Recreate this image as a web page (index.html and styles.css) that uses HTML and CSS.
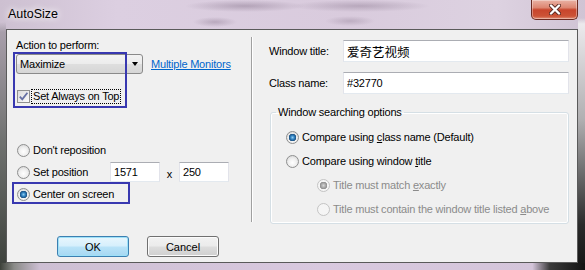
FILE: index.html
```html
<!DOCTYPE html>
<html lang="en">
<head>
  <meta charset="UTF-8"/>
  <title>AutoSize</title>
  <link rel="stylesheet" href="styles.css">
</head>
<body>
  <div class="window">
    <div class="titlebar">
      <span class="title">AutoSize</span>
      <button class="close" title="Close">
        <svg width="12" height="11" viewBox="0 0 12 11">
          <path d="M2 1.5 L10 9.5 M10 1.5 L2 9.5" stroke="#5a2a22" stroke-width="4" stroke-linecap="round"/>
          <path d="M2 1.5 L10 9.5 M10 1.5 L2 9.5" stroke="#fff" stroke-width="2.4" stroke-linecap="round"/>
        </svg>
      </button>
    </div>
    <div class="client">
      <div class="panes">
        <div class="left">
          <div class="line">Action to perform:</div>
          <div class="action-row">
            <div class="combo"><span>Maximize</span><span class="arrow"></span></div>
            <a class="link" href="#">Multiple Monitors</a>
          </div>
          <div class="check-row">
            <span class="checkbox">
              <svg width="11" height="11" viewBox="0 0 11 11"><path d="M1.8 5.6 L4.3 8.4 L9.4 1.8" fill="none" stroke="#6671a4" stroke-width="1.8"/></svg>
            </span>
            <span class="focus">Set Always on Top</span>
          </div>
          <div class="radios">
            <div class="radio-row"><span class="radio"></span><span>Don't reposition</span></div>
            <div class="radio-row">
              <span class="radio"></span><span class="pos-label">Set position</span>
              <input class="box num" value="1571"/>
              <span class="x-sep">x</span>
              <input class="box num" value="250"/>
            </div>
            <div class="radio-row"><span class="radio on"></span><span>Center on screen</span></div>
          </div>
          <div class="mark mark-action"></div>
          <div class="mark mark-center"></div>
        </div>
        <div class="sep"></div>
        <div class="right">
          <div class="field-row">
            <label>Window title:</label>
            <input class="box wide cjk" value="爱奇艺视频"/>
          </div>
          <div class="field-row">
            <label>Class name:</label>
            <input class="box wide" value="#32770"/>
          </div>
          <fieldset class="group">
            <legend>Window searching options</legend>
            <div class="group-list">
              <div class="opt"><span class="radio on"></span><span>Compare using <u>c</u>lass name (Default)</span></div>
              <div class="opt"><span class="radio"></span><span>Compare using window <u>t</u>itle</span></div>
              <div class="opt sub dis"><span class="radio on"></span><span>Title must match <u>e</u>xactly</span></div>
              <div class="opt sub dis"><span class="radio"></span><span>Title must contain the window title listed <u>a</u>bove</span></div>
            </div>
          </fieldset>
        </div>
      </div>
      <div class="buttons">
        <button class="btn default">OK</button>
        <button class="btn">Cancel</button>
      </div>
    </div>
  </div>
</body>
</html>
```

FILE: styles.css
```css
*{box-sizing:border-box;}
body{margin:0;font:11px "Liberation Sans","Noto Sans CJK SC",sans-serif;letter-spacing:-0.2px;color:#000;background:#fff;}

/* window frame */
.window{width:585px;height:270px;display:flex;flex-direction:column;
  background:
    linear-gradient(90deg,#3c4139 0,#8a8b88 14px,#cdbfd3 40px,#d9c9df 55%,#d4c5da 91%,#3a3a3a 94%,#121212 100%) left bottom/100% 7px no-repeat,
    linear-gradient(rgba(0,0,0,0) 0,rgba(0,0,0,0) 22px,#a89fab 32px,#707270 140px,#3b403a 100%) left top/6px 100% no-repeat,
    linear-gradient(rgba(0,0,0,0) 0,rgba(0,0,0,0) 18px,#eceaed 24px,#b0afb1 120px,#2a2a2a 225px,#141414 100%) right top/7px 100% no-repeat,
    radial-gradient(ellipse 60px 6px at 245px 6px,rgba(105,85,110,.35),rgba(105,85,110,0)),
    radial-gradient(ellipse 70px 6px at 360px 6px,rgba(105,85,110,.3),rgba(105,85,110,0)),
    radial-gradient(ellipse 22px 5px at 215px 22px,rgba(105,85,110,.3),rgba(105,85,110,0)),
    radial-gradient(ellipse 25px 5px at 350px 21px,rgba(105,85,110,.25),rgba(105,85,110,0)),
    linear-gradient(90deg,#cdc0d1,#dccfe1 20%,#d9cbdd 60%,#ddd2e1 85%,#d0c4d4);}
.titlebar{height:29px;flex:none;display:flex;align-items:flex-start;}
.title{padding:7px 0 0 8px;font-size:12.5px;line-height:15px;letter-spacing:0;text-shadow:0 0 6px #fff,0 0 10px #fff;}
.close{margin-left:auto;margin-right:7px;width:47px;height:20px;padding:0;display:flex;align-items:center;justify-content:center;
  border:1px solid #6b2b22;border-top:none;border-radius:0 0 5px 5px;
  background:linear-gradient(#eab2a4 0,#dd8671 40%,#c8452c 52%,#cc5336 85%,#e2927b 100%);
  box-shadow:inset 0 0 0 1px rgba(255,255,255,.35);}

.client{flex:1;margin:0 7px 7px 6px;border:1px solid #5a5a5a;background:#f0f0f0;display:flex;flex-direction:column;}
.panes{display:flex;}

/* left column */
.left{position:relative;width:244px;padding:9px 0 0 9px;}
.line{line-height:13px;}
.action-row{display:flex;align-items:center;margin-top:2px;}
.combo{width:127px;height:20px;display:flex;align-items:center;padding-left:3px;border:1px solid #8a8a8a;border-radius:3px;
  background:linear-gradient(#f3f3f3 0,#ececec 48%,#dedede 52%,#d6d6d6 100%);}
.arrow{margin-left:auto;margin-right:4px;border-left:3.5px solid transparent;border-right:3.5px solid transparent;border-top:4px solid #000;}
.link{margin-left:8px;color:#0066cc;text-decoration:underline;}
.check-row{display:flex;align-items:center;margin:15px 0 0 1px;height:15px;}
.checkbox{width:13px;height:13px;flex:none;border:1px solid #8e8f8f;display:flex;align-items:center;justify-content:center;
  background:linear-gradient(135deg,#dcdcdc,#fbfbfb);}
.focus{margin-left:1px;padding:0 1px;border:1px dotted #000;line-height:13px;}
.radios{margin-top:35px;}
.radio-row{height:22px;display:flex;align-items:center;padding-left:1px;}
.pos-label{width:77px;}
.x-sep{width:19px;text-align:center;padding-top:3px;}
.mark{position:absolute;border:2px solid #3838b0;}
.mark-action{left:6px;top:22px;width:114px;height:56px;}
.mark-center{left:5px;top:152px;width:118px;height:22px;}

/* shared controls */
.radio{width:13px;height:13px;flex:none;margin-right:3px;border-radius:50%;border:1px solid #8e8f8f;
  background:radial-gradient(circle at 50% 60%,#fff 0,#f0f0f0 45%,#cfcfcf 100%);}
.radio.on{background:radial-gradient(circle,#8fcdf0 0,#2f7fbf 2px,#1b4f7f 3.5px,rgba(255,255,255,0) 4px),
  radial-gradient(circle at 50% 60%,#fff 0,#f0f0f0 45%,#cfcfcf 100%);}
.dis{color:#8b8b8b;}
.dis .radio{border-color:#c4c4c4;background:#f5f5f5;}
.dis .radio.on{background:radial-gradient(circle,#d6d6d6 0,#a2a2a2 2.5px,#8e8e8e 3.5px,rgba(255,255,255,0) 4px),#f5f5f5;}
.box{height:20px;padding:0 3px;border:1px solid;border-color:#abadb3 #e2e3ea #e3e9ef #e2e3ea;background:#fff;font:inherit;letter-spacing:inherit;color:#000;outline:none;}
.num{width:50px;}

.sep{margin:7px 0 2px;border-left:1px solid #a0a0a0;border-right:1px solid #fff;}

/* right column */
.right{width:324px;padding:10px 8px 0 16px;}
.field-row{display:flex;align-items:center;}
.field-row + .field-row{margin-top:10px;}
.field-row label{width:74px;}
.wide{width:226px;height:22px;}
.cjk{font-size:12.5px;letter-spacing:0;}
.group{margin:12px 0 0 1px;padding:0 0 2px 5px;width:299px;border:1px solid #d5dfe5;border-radius:3px;box-shadow:inset 0 0 0 1px #fff;}
.group legend{padding:0 2px;line-height:13px;}
.group-list{margin:6px 0 0 10px;}
.opt{height:24px;display:flex;align-items:center;}
.opt.sub{padding-left:31px;}
u{text-decoration:underline;}

/* bottom buttons */
.buttons{display:flex;gap:18px;padding-left:50px;margin-top:12px;}
.btn{width:72px;height:21px;padding:0;font:inherit;color:#000;border:1px solid #707070;border-radius:3px;
  background:linear-gradient(#f2f2f2 0,#ebebeb 48%,#dddddd 52%,#cfcfcf 100%);box-shadow:inset 0 0 0 1px #fbfbfb;}
.btn.default{border-color:#3c7fb1;background:linear-gradient(#e8f6fd 0,#d6effc 48%,#b9e3f8 52%,#a6d7f2 100%);box-shadow:inset 0 0 0 1px #9ee1f8;}
```
